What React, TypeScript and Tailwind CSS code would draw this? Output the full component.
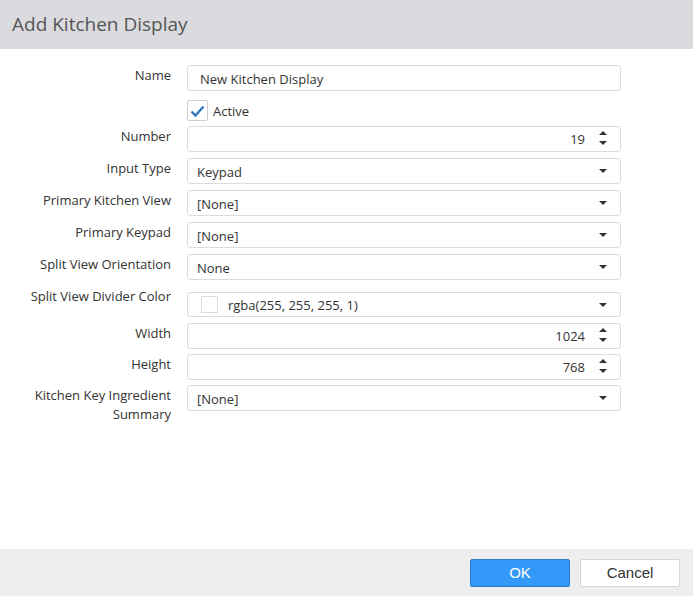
import React from "react";

const font = { fontFamily: '"Open Sans", "Noto Sans", sans-serif' };

function Caret() {
  return (
    <svg width="8" height="4" viewBox="0 0 8 4" className="block">
      <path d="M0 0 L8 0 L4 4 Z" fill="#333" />
    </svg>
  );
}

function Spinner() {
  return (
    <div className="flex flex-col items-center gap-[6px] -mt-[2px]">
      <svg width="8" height="4" viewBox="0 0 8 4" className="block">
        <path d="M0 4 L8 4 L4 0 Z" fill="#333" />
      </svg>
      <svg width="8" height="4" viewBox="0 0 8 4" className="block">
        <path d="M0 0 L8 0 L4 4 Z" fill="#333" />
      </svg>
    </div>
  );
}

function Row({ label, children, className = "" }: { label: React.ReactNode; children: React.ReactNode; className?: string }) {
  return (
    <div className={"flex items-start " + className}>
      <div className="w-[171px] shrink-0 text-right text-[13px] leading-[19px] pt-[1px] text-[#333]">{label}</div>
      <div className="ml-[16px] w-[434px]">{children}</div>
    </div>
  );
}

function Select({ value }: { value: string }) {
  return (
    <div className="h-[26px] border border-[#dcdcdc] rounded-[3px] flex items-center pl-[9px] pr-[13px] text-[13px] leading-[19px] text-[#333]">
      <span className="flex-1 pt-[2px]">{value}</span>
      <Caret />
    </div>
  );
}

function NumberBox({ value }: { value: string }) {
  return (
    <div className="h-[26px] border border-[#dcdcdc] rounded-[3px] flex items-center justify-end pr-[13px] text-[13px] leading-[19px] text-[#333]">
      <span className="mr-[14px] pt-[1px]">{value}</span>
      <Spinner />
    </div>
  );
}

export default function App() {
  return (
    <div className="w-[693px] h-[596px] flex flex-col bg-white" style={font}>
      <div className="h-[49px] bg-[#dbdbdf] flex items-center pl-[12px] shrink-0">
        <span className="text-[19px] text-[#555] leading-none">Add Kitchen Display</span>
      </div>
      <div className="flex-1 pt-[16px]">
        <div className="flex flex-col gap-[6px]">
          <Row label="Name">
            <div className="h-[26px] border border-[#dcdcdc] rounded-[3px] flex items-center pl-[12px] pt-[2px] text-[13px] leading-[19px] text-[#333]">
              New Kitchen Display
            </div>
          </Row>
          <div className="h-[21px] flex items-center ml-[187px] mt-[3px] -mb-[1px]">
            <div className="w-[21px] h-[21px] border border-[#cfcfcf] rounded-[2px] flex items-center justify-center">
              <svg width="15" height="12" viewBox="0 0 15 12">
                <path d="M1.5 6.5 L5.5 10.5 L13.5 1.5" fill="none" stroke="#2f78c0" strokeWidth="2.4" />
              </svg>
            </div>
            <span className="ml-[5px] pt-[2px] text-[13px] leading-[19px] text-[#333]">Active</span>
          </div>
          <Row label="Number">
            <NumberBox value="19" />
          </Row>
          <Row label="Input Type">
            <Select value="Keypad" />
          </Row>
          <Row label="Primary Kitchen View">
            <Select value="[None]" />
          </Row>
          <Row label="Primary Keypad">
            <Select value="[None]" />
          </Row>
          <Row label="Split View Orientation">
            <Select value="None" />
          </Row>
          <Row label="Split View Divider Color">
            <div className="mt-[6px] h-[25px] border border-[#dcdcdc] rounded-[3px] flex items-center pl-[13px] pr-[13px] text-[13px] leading-[19px] text-[#333]">
              <div className="w-[17px] h-[17px] border border-[#dcdcdc] bg-white mr-[10px]" />
              <span className="flex-1 pt-[1px]">rgba(255, 255, 255, 1)</span>
              <Caret />
            </div>
          </Row>
          <Row label="Width">
            <NumberBox value="1024" />
          </Row>
          <Row label="Height" className="-mt-[1px]">
            <NumberBox value="768" />
          </Row>
          <Row label={<>Kitchen Key Ingredient<br />Summary</>} className="-mt-[1px]">
            <Select value="[None]" />
          </Row>
        </div>
      </div>
      <div className="h-[47px] bg-[#eeeeee] shrink-0 flex items-start justify-end pt-[10px] pr-[13px] gap-[10px]" style={{ fontFamily: '"Liberation Sans", Arial, sans-serif' }}>
        <button className="w-[100px] h-[28px] bg-[#3399f8] border border-[#2a7fd0] rounded-[2px] text-white text-[15px]">OK</button>
        <button className="w-[100px] h-[28px] bg-white border border-[#d6d6d6] rounded-[2px] text-[#333] text-[15px]">Cancel</button>
      </div>
    </div>
  );
}
